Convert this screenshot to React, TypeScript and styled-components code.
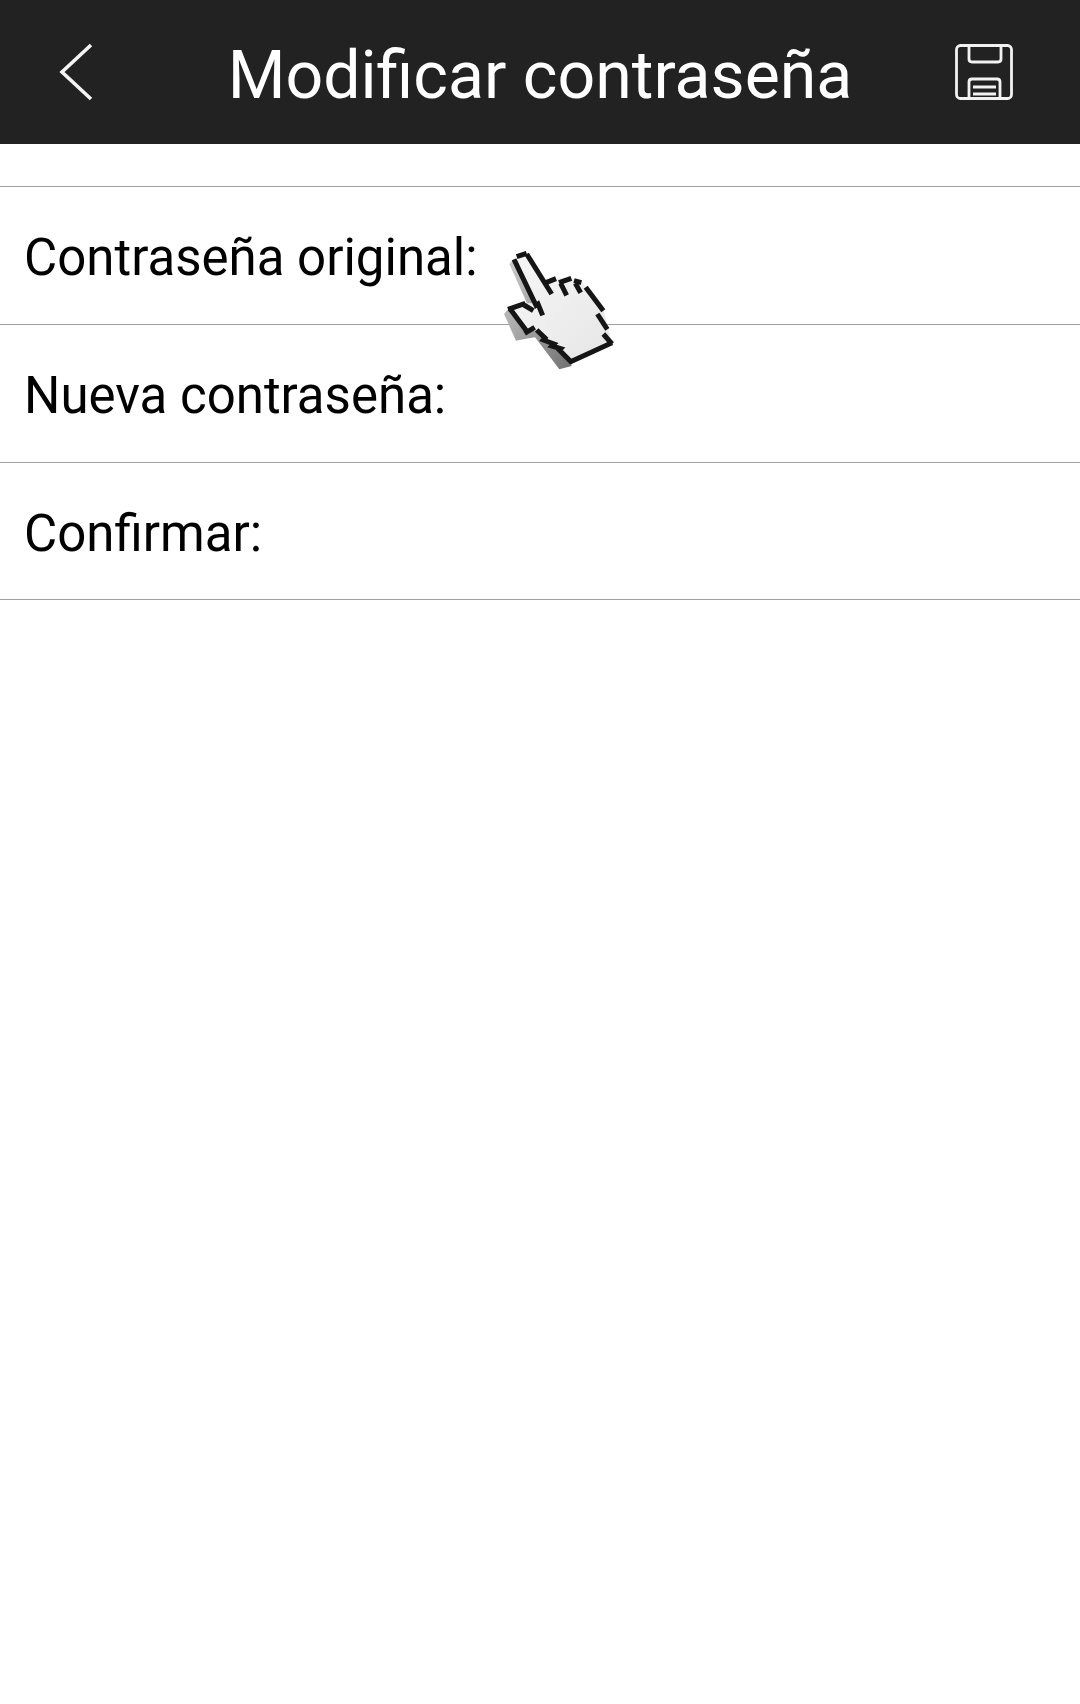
import React from 'react';
import styled, {createGlobalStyle} from 'styled-components';

const GlobalStyle = createGlobalStyle`
  html, body {
    margin: 0;
    padding: 0;
    background: #fff;
  }
  body {
    font-family: Roboto, "Liberation Sans", sans-serif;
  }
`;

const Page = styled.div`
  position: relative;
  width: 1080px;
  height: 1704px;
  overflow: hidden;
  background: #fff;
`;

const Header = styled.header`
  display: grid;
  grid-template-columns: 1fr auto 1fr;
  align-items: center;
  height: 144px;
  background: #222222;
`;

const Title = styled.h1`
  margin: 0;
  padding-top: 8px;
  color: #fff;
  font-size: 66.2px;
  font-weight: 400;
  line-height: 1;
  white-space: nowrap;
`;

const BackButton = styled.div`
  display: flex;
  justify-self: start;
  margin-left: 58px;
`;

const SaveButton = styled.div`
  display: flex;
  justify-self: end;
  margin-right: 67px;
`;

const Form = styled.div`
  margin-top: 42px;
  border-top: 1px solid #a0a0a0;
`;

const Row = styled.div`
  display: flex;
  align-items: center;
  box-sizing: border-box;
  height: 138px;
  padding: 4px 0 0 24px;
  border-bottom: 1px solid #a0a0a0;

  &:last-child {
    height: 137px;
  }
`;

const Label = styled.span`
  color: #000;
  font-size: 51px;
  font-weight: 400;
`;

const Cursor = styled.svg`
  position: absolute;
  left: 490px;
  top: 240px;
`;

// hand outline and its black edges, in 3x units of the 130x140 cursor box
const handFill =
  'M72 60 L110 42 L175 125 L200 115 L245 115 L275 125 L340 210 L355 265 L365 310 L240 365 L190 320 L140 270 L105 280 L55 205 L105 190 L135 190 Z';

const handShadow =
  'M72 55 L58 72 L112 192 L60 200 L42 222 L78 302 L108 296 L135 292 L208 388 L245 378 L240 360 L140 260 L130 190 Z';

const handEdges = [
  'M80 50 L110 40',
  'M72 58 L138 196 L144 192 L158 226',
  'M110 42 L185 162',
  'M168 128 L198 116',
  'M207 128 L244 115',
  'M212 130 L230 166',
  'M252 122 L274 128',
  'M256 130 L272 158',
  'M287 142 L340 212',
  'M322 222 L352 268',
  'M340 282 L366 312',
  'M366 308 L240 366',
  'M246 368 L208 330 L212 326 L186 318 L192 312 L160 300 L165 294 L140 270',
  'M134 262 L104 280',
  'M112 276 L60 206',
  'M54 208 L106 190',
  'M102 195 L130 212',
];

const labels = ['Contraseña original:', 'Nueva contraseña:', 'Confirmar:'];

const App: React.FC = () => (
  <Page>
    <GlobalStyle />
    <Header>
      <BackButton>
        <svg width="36" height="58" viewBox="0 0 36 58" fill="none">
          <path d="M33 2 L4 29 L33 56" stroke="#f4f4f4" strokeWidth="3.6" />
        </svg>
      </BackButton>
      <Title>Modificar contraseña</Title>
      <SaveButton>
        <svg width="58" height="56" viewBox="0 0 58 56" fill="none" stroke="#f2f2f2" strokeWidth="2.8">
          <rect x="1.5" y="1.5" width="55" height="53" rx="4" />
          <path d="M14 2 V15 Q14 18 17 18 H43 Q46 18 46 15 V2" />
          <path d="M14 54 V38 Q14 35 17 35 H42 Q45 35 45 38 V54" />
          <path d="M18 43 H41 M18 50 H41" />
        </svg>
      </SaveButton>
    </Header>
    <Form>
      {labels.map((label) => (
        <Row key={label}>
          <Label>{label}</Label>
        </Row>
      ))}
    </Form>
    <Cursor width="130" height="140" viewBox="0 0 390 420">
      <defs>
        <linearGradient id="handFill" x1="0" y1="0" x2="1" y2="1">
          <stop offset="0" stopColor="#f6f6f6" />
          <stop offset="1" stopColor="#e6e6e6" />
        </linearGradient>
        <linearGradient id="handShadow" x1="0" y1="0" x2="1" y2="1">
          <stop offset="0" stopColor="#d0d0d0" />
          <stop offset="1" stopColor="#707070" />
        </linearGradient>
      </defs>
      <path d={handShadow} fill="url(#handShadow)" />
      <path d={handFill} fill="url(#handFill)" />
      {handEdges.map((d) => (
        <path key={d} d={d} fill="none" stroke="#151515" strokeWidth="15" />
      ))}
    </Cursor>
  </Page>
);

export default App;
